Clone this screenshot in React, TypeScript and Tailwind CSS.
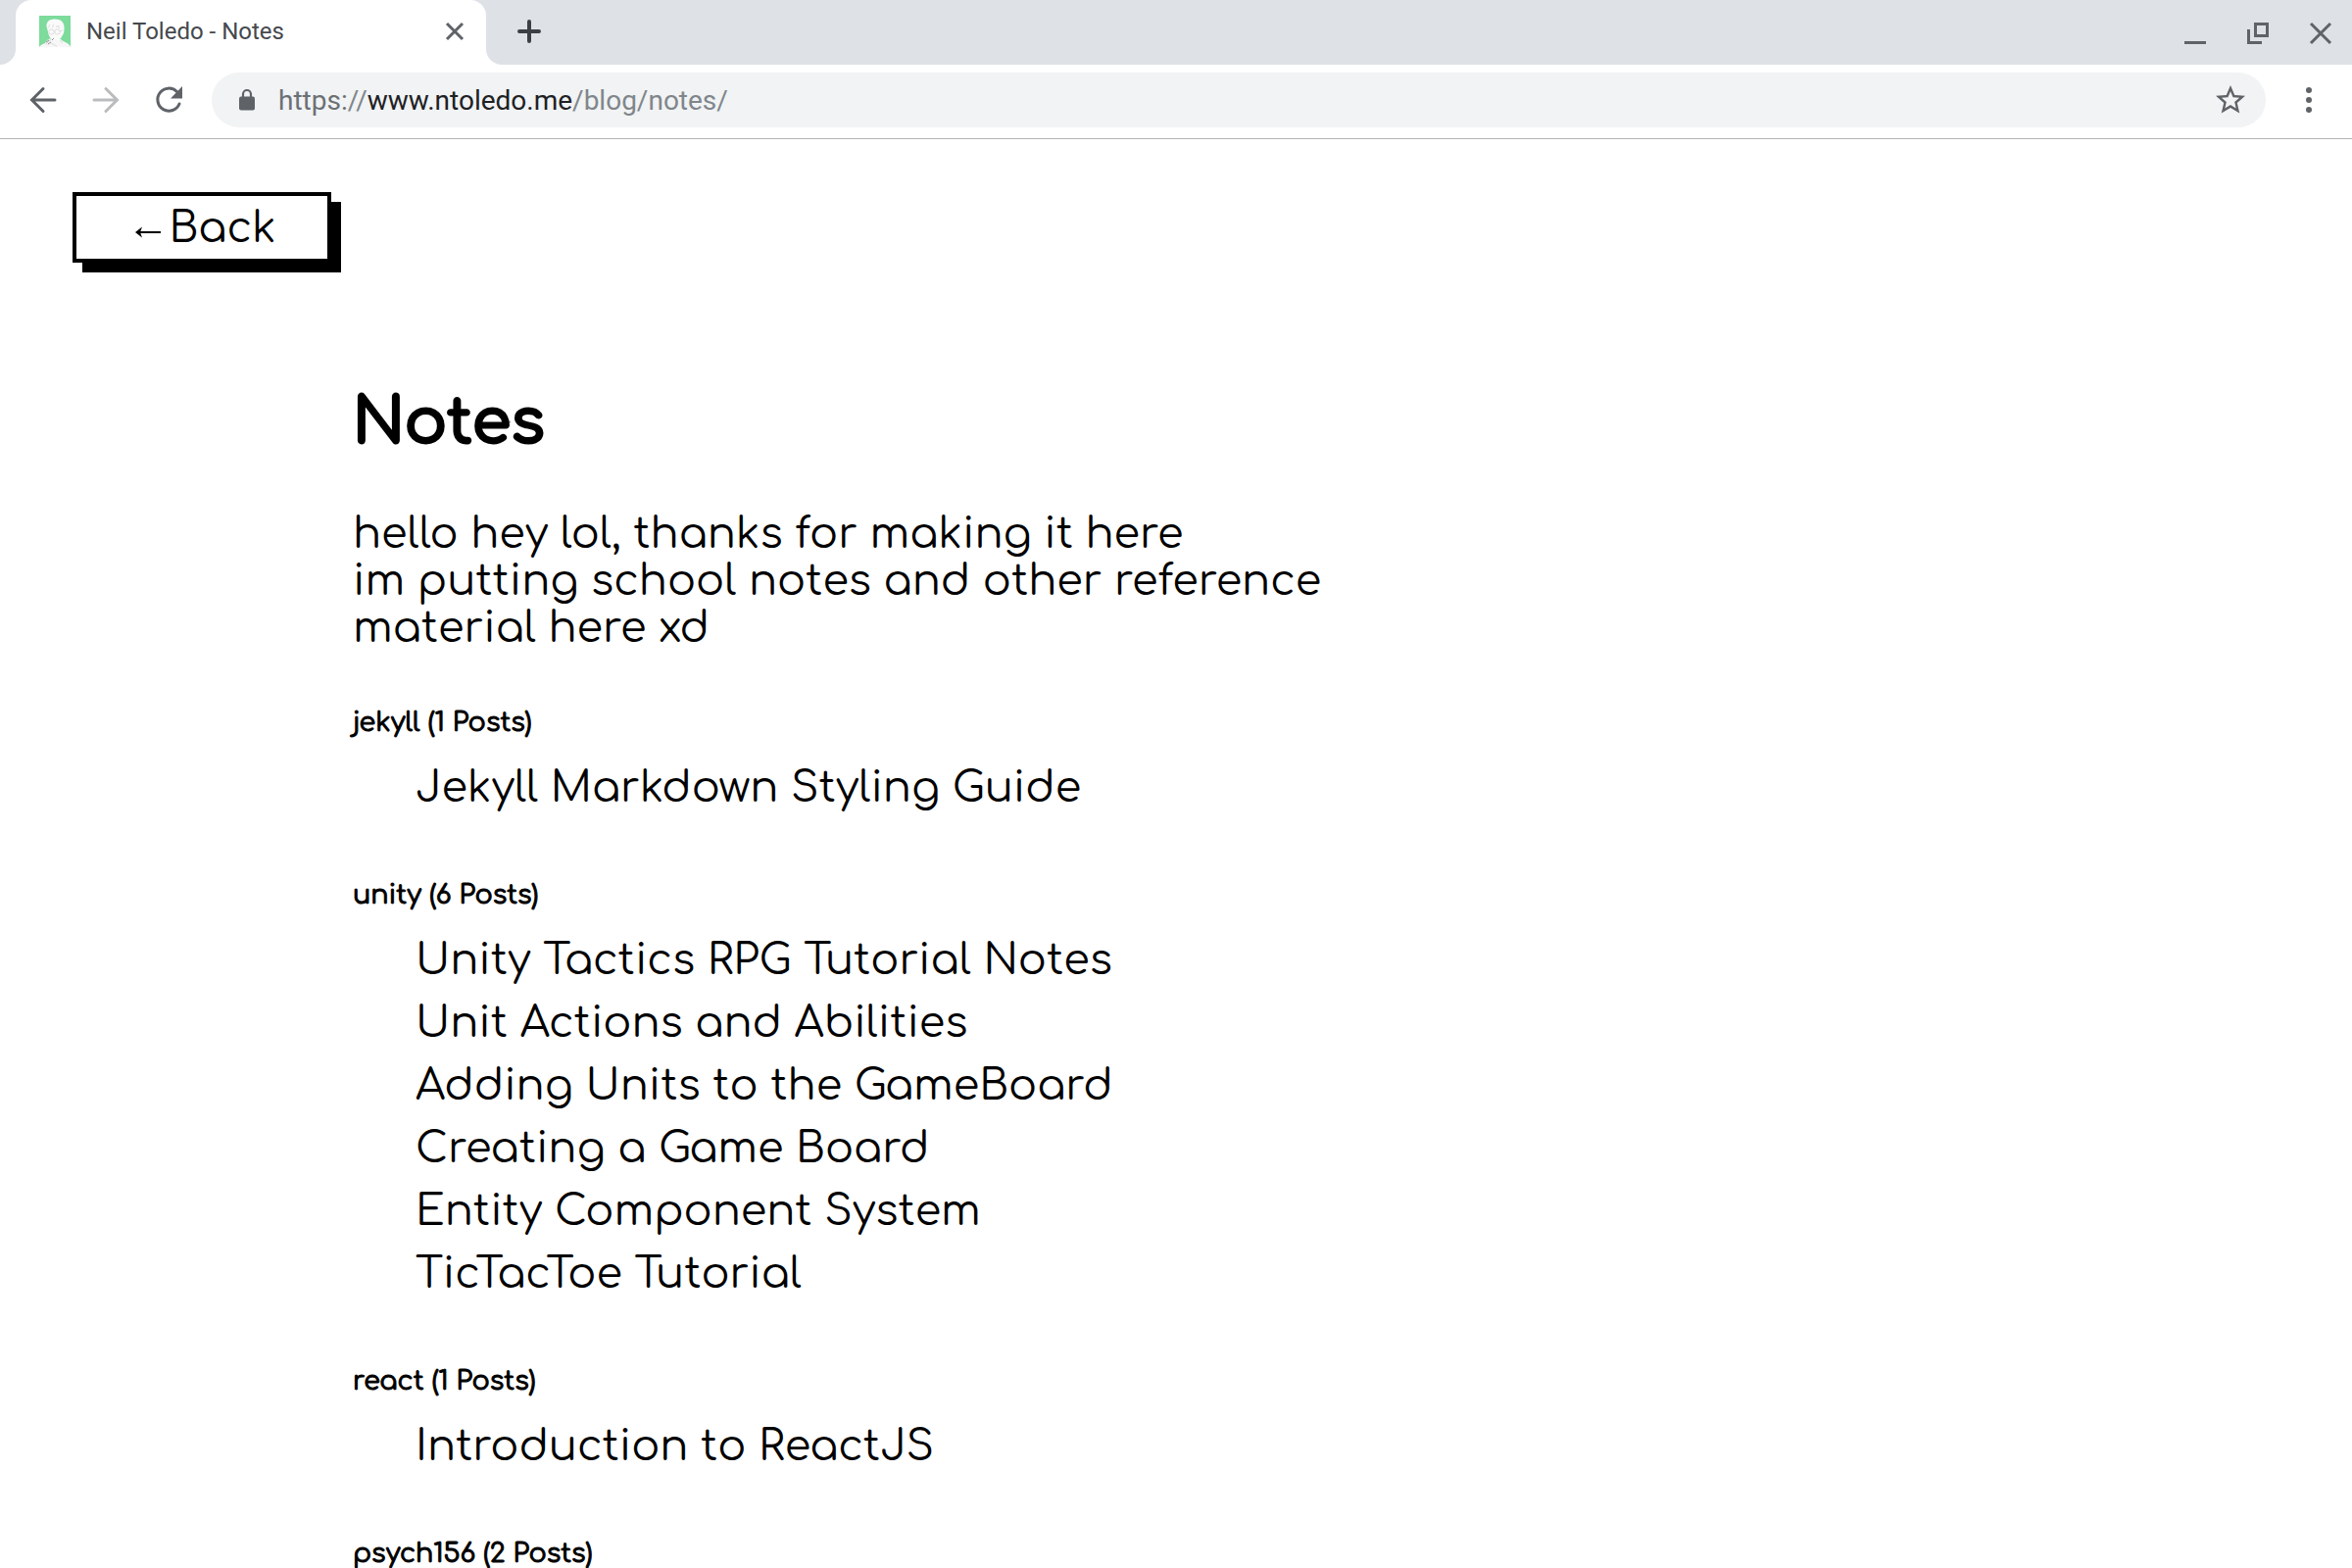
import type { ReactNode } from 'react'

type Group = { name: string; count: number; posts: string[] }

const groups: Group[] = [
  { name: 'jekyll', count: 1, posts: ['Jekyll Markdown Styling Guide'] },
  {
    name: 'unity',
    count: 6,
    posts: [
      'Unity Tactics RPG Tutorial Notes',
      'Unit Actions and Abilities',
      'Adding Units to the GameBoard',
      'Creating a Game Board',
      'Entity Component System',
      'TicTacToe Tutorial',
    ],
  },
  { name: 'react', count: 1, posts: ['Introduction to ReactJS'] },
  { name: 'psych156', count: 2, posts: [] },
]

function IconButton({ label, className = '', children }: { label: string; className?: string; children: ReactNode }) {
  return (
    <button type="button" aria-label={label} className={`flex shrink-0 items-center justify-center ${className}`}>
      {children}
    </button>
  )
}

function Avatar() {
  return (
    <svg viewBox="0 0 32 32" className="size-8 shrink-0" aria-hidden="true">
      <rect width="32" height="32" fill="#7ddb9c" />
      <path d="M0 32c2-3 6-4 10-5l4-3h8c2 3 8 3 10 8z" fill="#f7f7f7" />
      <path d="M8 13C6 7 10 3 16 3.500c7 0 10 4 9.500 10 0 3-.5 5-2 7-1 3-4 5-7 5-5-1-7-5-7.500-9z" fill="#fafafa" />
      <path d="M6 29c0-3 3-5 6-6l2 1-3 4-3 3z" fill="#f2f2f2" />
      <g fill="none" stroke="#c9c9c9" strokeWidth=".6">
        <circle cx="12.500" cy="16.500" r="2.600" />
        <circle cx="18.500" cy="16.500" r="2.600" />
        <path d="M21 16l3-1M8.500 13c1-1 2-2 2-4m3 3l1-3m3 3l1-2m2 3l-1-3M12 28l6 3m-11-2l5-5m9 1l3 3" />
      </g>
      <path d="M7 27l3-2M9 29l3-2M13 25l2-2" stroke="#777" strokeWidth=".8" />
    </svg>
  )
}

function TabStrip() {
  return (
    <div className="flex h-[66px] bg-[#dee1e6]">
      <div className="h-4 w-4 self-end bg-white">
        <div className="h-full rounded-br-2xl bg-[#dee1e6]" />
      </div>
      <div className="flex w-[480px] items-center rounded-t-2xl bg-white pr-[16px] pb-0.5 pl-6">
        <Avatar />
        <span className="ml-4 flex-1 text-[24px] leading-8 text-[#45494d]">Neil Toledo - Notes</span>
        <IconButton label="Close tab" className="size-8">
          <svg viewBox="0 0 32 32" className="size-8" fill="none" stroke="#5f6368" strokeWidth="3">
            <path d="M8 8l16 16M24 8L8 24" />
          </svg>
        </IconButton>
      </div>
      <div className="h-4 w-4 self-end bg-white">
        <div className="h-full rounded-bl-2xl bg-[#dee1e6]" />
      </div>
      <IconButton label="New tab" className="ml-3 h-16 w-8">
        <svg viewBox="0 0 32 32" className="size-8" fill="none" stroke="#3c4043" strokeWidth="4" strokeLinecap="round">
          <path d="M16 6v20M6 16h20" />
        </svg>
      </IconButton>
      <div className="ml-auto flex items-center gap-8 pt-0.5 pr-4">
        <IconButton label="Minimize" className="size-8">
          <svg viewBox="0 0 32 32" className="size-8" fill="none" stroke="#5f6368" strokeWidth="3">
            <path d="M5 25.500h22" />
          </svg>
        </IconButton>
        <IconButton label="Restore" className="size-8">
          <svg viewBox="0 0 32 32" className="size-8" fill="none" stroke="#5f6368" strokeWidth="3">
            <path d="M13.500 6.500h12v12h-12zM6.500 12v13.500H20" />
          </svg>
        </IconButton>
        <IconButton label="Close window" className="size-8">
          <svg viewBox="0 0 32 32" className="size-8" fill="none" stroke="#5f6368" strokeWidth="3">
            <path d="M6 6l20 20M26 6L6 26" />
          </svg>
        </IconButton>
      </div>
    </div>
  )
}

function Toolbar() {
  return (
    <div className="flex h-[76px] items-center border-b border-[#b0b3b5] bg-white pr-6 pb-1 pl-6">
      <div className="flex gap-6">
        <IconButton label="Back" className="size-10">
          <svg viewBox="0 0 40 40" className="size-10" fill="none" stroke="#5f6368" strokeWidth="3" strokeLinecap="round">
            <path d="M32 20H9M20 8.500L8.500 20 20 31.500" />
          </svg>
        </IconButton>
        <IconButton label="Forward" className="size-10">
          <svg viewBox="0 0 40 40" className="size-10" fill="none" stroke="#babcbe" strokeWidth="3" strokeLinecap="round">
            <path d="M8 20h23M20 8.500L31.500 20 20 31.500" />
          </svg>
        </IconButton>
        <IconButton label="Reload" className="size-10">
          <svg viewBox="0 0 40 40" className="size-10">
            <path d="M31 24.500A11.500 11.500 0 1 1 28.500 12" transform="translate(0 -.5)" fill="none" stroke="#5f6368" strokeWidth="3" strokeLinecap="round" />
            <path d="M34 6v12.500H22z" fill="#5f6368" />
          </svg>
        </IconButton>
      </div>
      <div className="ml-6 flex h-14 flex-1 items-center rounded-full bg-[#f1f3f4] pr-[18px] pl-6">
        <svg viewBox="0 0 24 32" className="h-8 w-6" aria-hidden="true">
          <rect x="4" y="12.500" width="16" height="14" rx="2" fill="#5f6368" />
          <path d="M8 13v-3a4 4 0 0 1 8 0v3" fill="none" stroke="#5f6368" strokeWidth="2.200" />
        </svg>
        <div
          role="textbox"
          aria-label="Address"
          contentEditable
          suppressContentEditableWarning
          className="ml-5 flex-1 pt-0.5 text-[28px] leading-8 text-[#80868b] outline-none"
        >
          <span className="text-[#6b7075]">https:</span>//<span className="text-[#202124]">www.ntoledo.me</span>/blog/notes/
        </div>
        <IconButton label="Bookmark this page" className="size-9">
          <svg viewBox="0 0 24 24" className="size-9" fill="#5f6368">
            <path d="M22 9.240l-7.190-.62L12 2 9.190 8.630 2 9.240l5.460 4.730L5.820 21 12 17.270 18.180 21l-1.630-7.030L22 9.240zM12 15.400l-3.760 2.270 1-4.280-3.320-2.880 4.380-.38L12 6.100l1.710 4.040 4.380.38-3.320 2.880 1 4.280L12 15.400z" />
          </svg>
        </IconButton>
      </div>
      <IconButton label="Menu" className="ml-6 size-10">
        <svg viewBox="0 0 40 40" className="size-10" fill="#5f6368">
          <circle cx="20" cy="10" r="3" />
          <circle cx="20" cy="20" r="3" />
          <circle cx="20" cy="30" r="3" />
        </svg>
      </IconButton>
    </div>
  )
}

export default function App() {
  return (
    <div className="flex h-screen flex-col overflow-hidden bg-white font-[Roboto,sans-serif]">
      <header>
        <TabStrip />
        <Toolbar />
      </header>
      <div className="min-h-0 flex-1 overflow-hidden font-[Comfortaa,Inter,sans-serif] text-[43px] text-black">
        <nav className="px-[74px] pt-[54px]">
          <a
            href="#back"
            className="inline-flex h-[72px] w-[264px] items-center justify-center border-4 border-black bg-white pt-0.5 pl-2 shadow-[10px_10px_0_#000]"
          >
            <svg viewBox="0 0 26 12" className="mt-2 mr-2 h-3 w-[26px]" fill="none" stroke="#000" strokeWidth="2" aria-hidden="true">
              <path d="M2 6h24" />
              <path d="M0 6l7-5.500-2 5.500 2 5.500z" fill="#000" stroke="none" />
            </svg>
            Back
          </a>
        </nav>
        <main className="max-w-[1400px] pt-[124px] pl-[360px]">
          <h1 className="text-[64px] leading-[80px] font-normal [-webkit-text-stroke:3px_#000]">Notes</h1>
          <p className="mt-[49px] leading-[48px]">
            hello hey lol, thanks for making it here
            <br />
            im putting school notes and other reference
            <br />
            material here xd
          </p>
          {groups.map((g) => (
            <section key={g.name} className="pt-[52px]">
              <h2 className="text-[27px] leading-[40px] font-normal [-webkit-text-stroke:1px_#000]">
                {g.name} ({g.count} Posts)
              </h2>
              <ul className="mt-[15px] pb-[5px] pl-16 leading-[64px]">
                {g.posts.map((p) => (
                  <li key={p}>
                    <a href="#post">{p}</a>
                  </li>
                ))}
              </ul>
            </section>
          ))}
        </main>
      </div>
    </div>
  )
}
